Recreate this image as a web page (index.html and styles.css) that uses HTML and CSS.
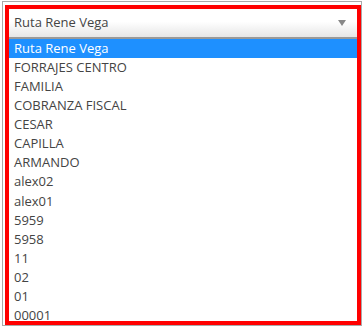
FILE: index.html
```html
<!DOCTYPE html>
<html>
    <head>
        <title>Ruta</title>
        <link rel="stylesheet" href="styles.css">
    </head>
    <body>
        <div class="picker">
            <div class="frame">
                <div class="head">
                    <span class="value">Ruta Rene Vega</span>
                    <span class="arrow"></span>
                </div>
                <ul class="options">
                    <li class="selected">Ruta Rene Vega</li>
                    <li>FORRAJES CENTRO</li>
                    <li>FAMILIA</li>
                    <li>COBRANZA FISCAL</li>
                    <li>CESAR</li>
                    <li>CAPILLA</li>
                    <li>ARMANDO</li>
                    <li>alex02</li>
                    <li>alex01</li>
                    <li>5959</li>
                    <li>5958</li>
                    <li>11</li>
                    <li>02</li>
                    <li>01</li>
                    <li>00001</li>
                </ul>
            </div>
        </div>
    </body>
</html>
```

FILE: styles.css
```css
body {
	margin : 0;
	background-color : #fff;
	font-family : "Open Sans", "Liberation Sans", sans-serif;
	font-size : 13px;
	color : #444;
}

.picker {
	margin : 1px 0 0 2px;
	width : 358px;
	height : 323px;
	border : 1px solid #aaa;
}

.frame {
	margin : 3px 0 0 2px;
	width : 348px;
	height : 312px;
	border : 4px solid #f00;
	overflow : hidden;
}

.head {
	display : flex;
	align-items : center;
	justify-content : space-between;
	height : 25px;
	padding : 0 11px 3px 5px;
	background-image : linear-gradient(#fff 45%, #e6e6e6);
	border-bottom : 2px solid #999;
}
	.head .value {
		color : #444;
	}
	.head .arrow {
		width : 0;
		height : 0;
		border-left : 4px solid transparent;
		border-right : 4px solid transparent;
		border-top : 6px solid #888;
		margin-top : 2px;
	}

.options {
	list-style : none;
	margin : 0;
	padding : 0;
}
	.options li {
		height : 19.07px;
		line-height : 19px;
		padding-left : 5px;
		white-space : nowrap;
	}
	.options li.selected {
		background-color : #1e90ff;
		color : #fff;
	}
```
